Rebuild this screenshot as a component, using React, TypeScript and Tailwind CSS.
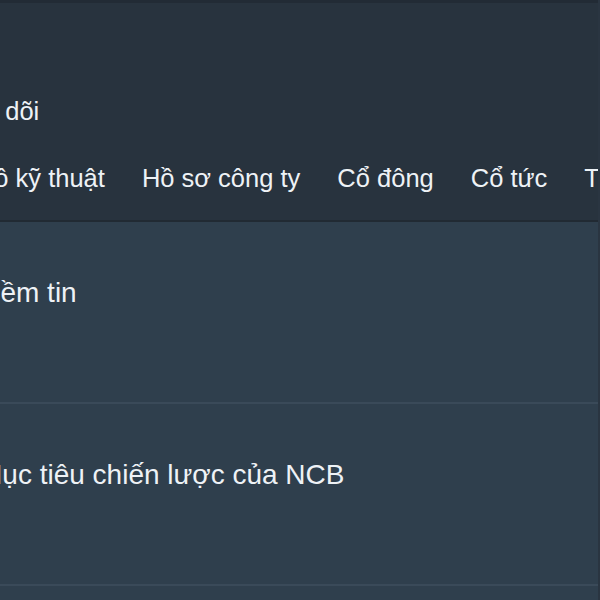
import React from 'react'

const tabs = ['Biểu đồ kỹ thuật', 'Hồ sơ công ty', 'Cổ đông', 'Cổ tức', 'Tài chính']
const posts = ['Niềm tin', 'Mục tiêu chiến lược của NCB']

export default function App() {
  return (
    <div
      className="w-[600px] h-[600px] overflow-hidden bg-[#2f3f4d] text-[#eef2f6] border-r-2 border-[#2a3541]"
      style={{ fontFamily: '"Liberation Sans", Arial, sans-serif' }}
    >
      <div className="h-[222px] bg-[#28333e] border-t-[3px] border-b-2 border-t-[#222b35] border-b-[#212a33] flex flex-col">
        <div className="pt-[93px] -ml-[60px] text-[25.5px] leading-[30px] whitespace-nowrap">Theo dõi</div>
        <div className="mt-[37px] -ml-[78px] flex gap-[37px] text-[25.5px] leading-[30px] whitespace-nowrap">
          {tabs.map((t) => (
            <span key={t}>{t}</span>
          ))}
        </div>
      </div>
      {posts.map((p, i) => (
        <div key={p} className="h-[182px] border-b-2 border-[#3a4a59] pt-[55px]">
          <div className={`${i === 0 ? '-ml-[26px]' : '-ml-[21px]'} text-[28px] leading-[32px] whitespace-nowrap`}>{p}</div>
        </div>
      ))}
    </div>
  )
}
